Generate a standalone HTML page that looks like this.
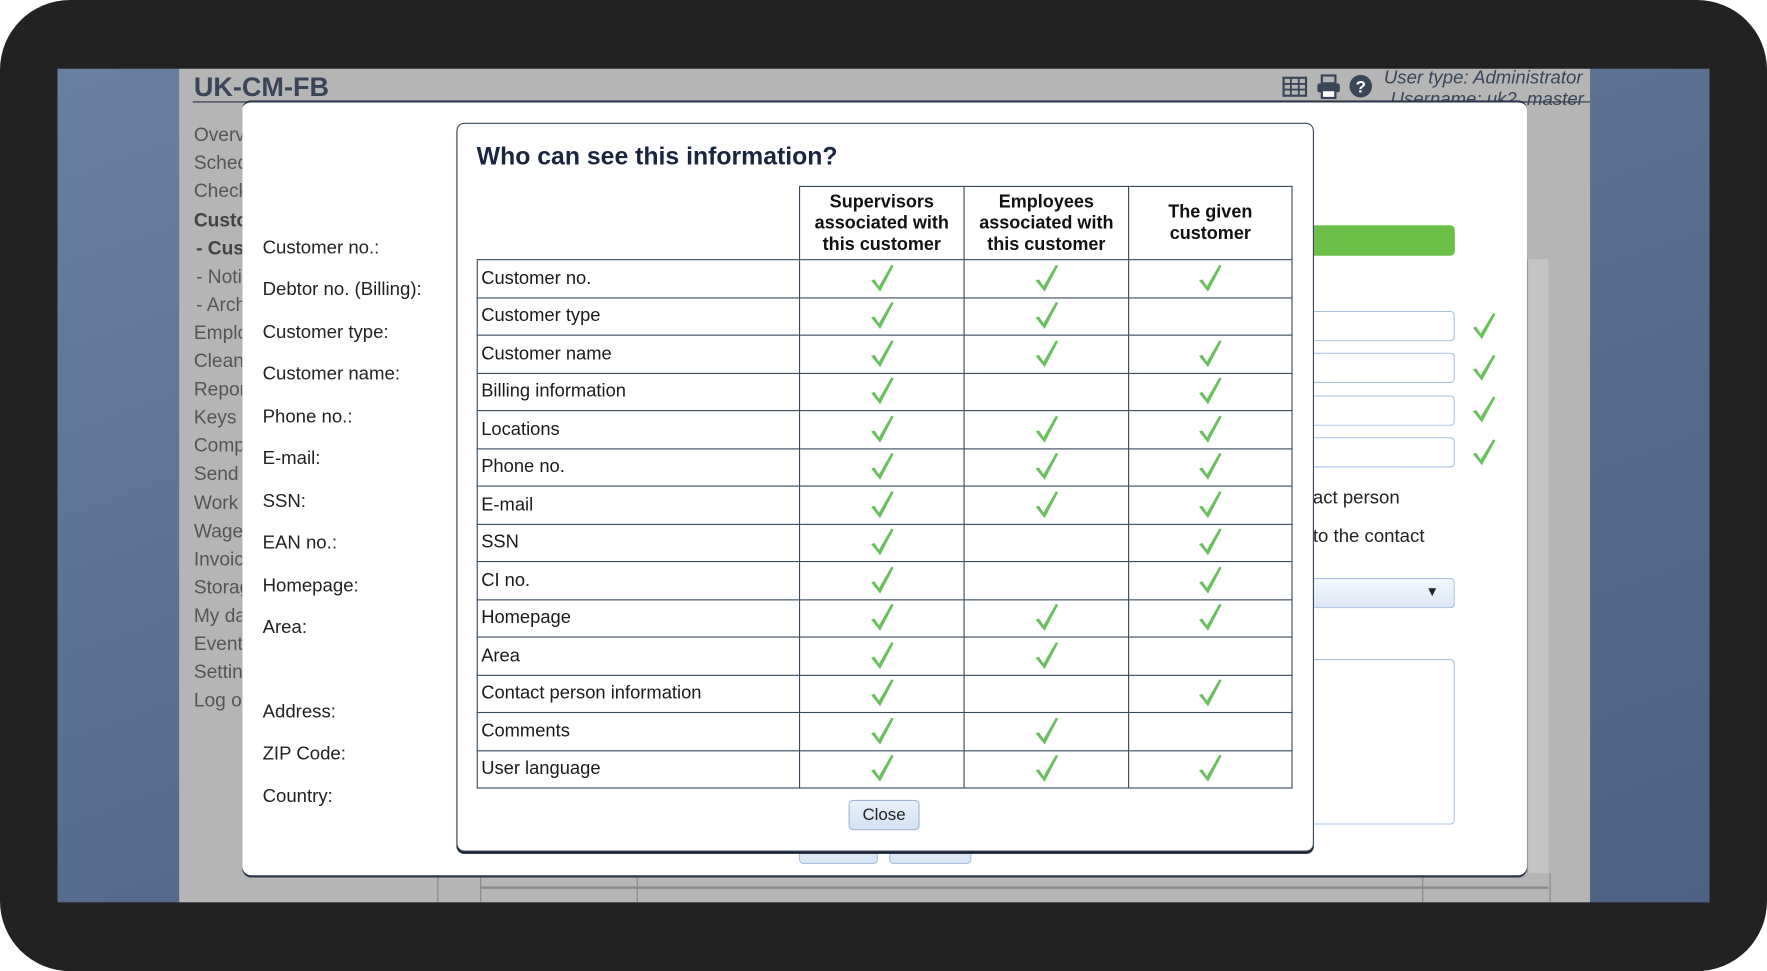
<!DOCTYPE html>
<html><head><meta charset="utf-8"><style>
html,body{margin:0;padding:0;width:1767px;height:971px;overflow:hidden;background:#fff;font-family:"Liberation Sans",Arial,sans-serif}
#w{position:absolute;left:0;top:0;width:1568px;height:862px;transform:scale(1.12691,1.1265);transform-origin:0 0;background:#fff}
.frame{position:absolute;left:0;top:0;width:1568px;height:862px;background:#222222;border-radius:62px}
.scr{position:absolute;left:51px;top:61px;width:1466px;height:740px;background:linear-gradient(160deg,#6a7f9e,#566b8b 60%,#4d6283);overflow:hidden}
.app{position:absolute;left:108px;top:0;width:1252px;height:740px;background:#b5b5b5}
.a{position:absolute;white-space:nowrap}
.menu{position:absolute;left:121px;font-size:17px;color:#555}
.lbl{position:absolute;left:233px;font-size:16.5px;color:#222}
.om{position:absolute;left:215px;top:89px;width:1140px;height:686px;background:#fff;border-radius:8px;box-shadow:0 2px 0 #2a3548;border-top:2px solid #2a3548}
.inp{position:absolute;left:1165px;width:125px;height:25px;border:1px solid #a8c0e0;border-left:none;border-radius:0 4px 4px 0;background:#fff}
.im{position:absolute;left:405px;top:109px;width:759px;height:645px;background:#fff;border:1px solid #3a4a5f;border-radius:7px;box-shadow:0 2px 0 #1a2233}
table{position:absolute;left:423px;top:165px;border-collapse:collapse;table-layout:fixed;width:723px;font-size:16.3px;color:#1a1a1a}
td{border:1.5px solid #3a4a5f;height:32px;padding:0 3px;box-sizing:border-box}
tr.r{height:33.5px}
td.c{text-align:center;padding:0}
th{border:1.5px solid #3a4a5f;font-weight:bold;font-size:16px;line-height:19px;height:64px;padding:0;color:#111}
th.e{border:none;border-bottom:1.5px solid #3a4a5f}
svg.k{width:22px;height:25px;vertical-align:middle}
</style></head><body><div id="w">
<div class="frame"></div>
<div class="scr">
 <div class="app">
  <div class="a" style="left:13px;top:3px;font-size:24px;font-weight:bold;color:#3a4658">UK-CM-FB</div>
  <div style="position:absolute;left:12px;top:29px;width:1240px;height:1px;background:#2a3548"></div>
  <div class="a" style="left:1069px;top:-1px;font-size:16.5px;font-style:italic;color:#3a4658">User type: Administrator</div>
  <div class="a" style="left:1075px;top:18px;font-size:16.5px;font-style:italic;color:#3a4658">Username: uk2_master</div>
  <svg class="a" style="left:979px;top:7px" width="22" height="18" viewBox="0 0 22 18"><rect x="1" y="1" width="20" height="16" fill="none" stroke="#3a4658" stroke-width="2"/><path d="M1 6.5H21M1 11.5H21M7.5 1V17M14.5 1V17" stroke="#3a4658" stroke-width="1.6"/></svg>
  <svg class="a" style="left:1009px;top:5px" width="22" height="22" viewBox="0 0 22 22"><rect x="5" y="1" width="12" height="7" fill="none" stroke="#3a4658" stroke-width="2"/><rect x="1" y="8" width="20" height="8" rx="2" fill="#3a4658"/><rect x="5" y="14" width="12" height="7" fill="#fff" stroke="#3a4658" stroke-width="2"/></svg>
  <svg class="a" style="left:1038px;top:5px" width="21" height="21" viewBox="0 0 21 21"><circle cx="10.5" cy="10.5" r="10" fill="#3a4658"/><text x="10.5" y="16" font-size="15" font-weight="bold" text-anchor="middle" fill="#fff" font-family="Liberation Sans">?</text></svg>
 </div>
</div>
<div class="menu" style="top:110px;left:172px">Overv</div>
<div class="menu" style="top:135px;left:172px">Sched</div>
<div class="menu" style="top:160px;left:172px">Check</div>
<div class="menu" style="top:186px;left:172px;font-weight:bold;color:#444">Custo</div>
<div class="menu" style="top:211px;left:174px;font-weight:bold;color:#444">- Cus</div>
<div class="menu" style="top:236px;left:174px">- Noti</div>
<div class="menu" style="top:261px;left:174px">- Arch</div>
<div class="menu" style="top:286px;left:172px">Emplo</div>
<div class="menu" style="top:311px;left:172px">Clean</div>
<div class="menu" style="top:336px;left:172px">Repor</div>
<div class="menu" style="top:361px;left:172px">Keys</div>
<div class="menu" style="top:386px;left:172px">Comp</div>
<div class="menu" style="top:411px;left:172px">Send</div>
<div class="menu" style="top:437px;left:172px">Work</div>
<div class="menu" style="top:462px;left:172px">Wage</div>
<div class="menu" style="top:487px;left:172px">Invoic</div>
<div class="menu" style="top:512px;left:172px">Storag</div>
<div class="menu" style="top:537px;left:172px">My da</div>
<div class="menu" style="top:562px;left:172px">Event</div>
<div class="menu" style="top:587px;left:172px">Settin</div>
<div class="menu" style="top:612px;left:172px">Log o</div>
<div style="position:absolute;left:388px;top:775px;width:1px;height:26px;background:#888"></div>
<div style="position:absolute;left:426px;top:775px;width:948px;height:26px;border-left:1px solid #888;border-right:1px solid #888"></div>
<div style="position:absolute;left:426px;top:787px;width:948px;height:2px;background:#888"></div>
<div style="position:absolute;left:565px;top:775px;width:1px;height:26px;background:#888"></div>
<div style="position:absolute;left:1262px;top:775px;width:1px;height:26px;background:#888"></div>
<div style="position:absolute;left:1355px;top:230px;width:18px;height:545px;background:#c4c4c4;border-left:1px solid #999"></div>
<div class="om"></div>
<div class="lbl" style="top:211px">Customer no.:</div>
<div class="lbl" style="top:248px">Debtor no. (Billing):</div>
<div class="lbl" style="top:286px">Customer type:</div>
<div class="lbl" style="top:323px">Customer name:</div>
<div class="lbl" style="top:361px">Phone no.:</div>
<div class="lbl" style="top:398px">E-mail:</div>
<div class="lbl" style="top:436px">SSN:</div>
<div class="lbl" style="top:473px">EAN no.:</div>
<div class="lbl" style="top:511px">Homepage:</div>
<div class="lbl" style="top:548px">Area:</div>
<div class="lbl" style="top:623px">Address:</div>
<div class="lbl" style="top:660px">ZIP Code:</div>
<div class="lbl" style="top:698px">Country:</div>
<div style="position:absolute;left:1160px;top:200px;width:131px;height:27px;background:#6cc04a;border-radius:0 4px 4px 0"></div>
<div class="inp" style="top:276px"></div>
<div class="inp" style="top:313px"></div>
<div class="inp" style="top:351px"></div>
<div class="inp" style="top:388px"></div>
<div class="lbl" style="left:1165px;top:433px">act person</div>
<div class="lbl" style="left:1165px;top:467px">to the contact</div>
<div class="inp" style="top:513px;background:linear-gradient(#f4f8fd,#dce7f5)"><span style="position:absolute;left:100px;top:4px;font-size:12px;color:#222">▼</span></div>
<div class="inp" style="top:585px;height:145px"></div>
<div style="position:absolute;left:709px;top:745px;width:68px;height:20px;background:#dce7f5;border:1px solid #a8c0e0;border-radius:4px"></div>
<div style="position:absolute;left:789px;top:745px;width:71px;height:20px;background:#dce7f5;border:1px solid #a8c0e0;border-radius:4px"></div>
<svg class="a" style="left:1306px;top:278px" width="22" height="24" viewBox="0 0 22 24"><path d="M1 13 L4 12 L8 18 L19 0 L21 1 L9 23 Z" fill="#6abf5e"/></svg>
<svg class="a" style="left:1306px;top:315px" width="22" height="24" viewBox="0 0 22 24"><path d="M1 13 L4 12 L8 18 L19 0 L21 1 L9 23 Z" fill="#6abf5e"/></svg>
<svg class="a" style="left:1306px;top:352px" width="22" height="24" viewBox="0 0 22 24"><path d="M1 13 L4 12 L8 18 L19 0 L21 1 L9 23 Z" fill="#6abf5e"/></svg>
<svg class="a" style="left:1306px;top:390px" width="22" height="24" viewBox="0 0 22 24"><path d="M1 13 L4 12 L8 18 L19 0 L21 1 L9 23 Z" fill="#6abf5e"/></svg>
<div class="im"></div>
<div class="a" style="left:423px;top:126px;font-size:22px;font-weight:bold;color:#1a2540">Who can see this information?</div>
<table id="t">
<colgroup><col style="width:286px"><col style="width:146px"><col style="width:146px"><col style="width:145px"></colgroup>
<tr><th class="e"></th><th>Supervisors<br>associated with<br>this customer</th><th>Employees<br>associated with<br>this customer</th><th>The given<br>customer</th></tr>
</table>
<div style="position:absolute;left:753px;top:710px;width:61px;height:25px;background:linear-gradient(#e8f0fa,#d3e1f3);border:1px solid #9fb5d5;border-radius:4px;font-size:15px;text-align:center;line-height:25px;color:#222">Close</div>
</div>
<script>
var rows=[["Customer no.","111"],["Customer type","110"],["Customer name","111"],["Billing information","101"],["Locations","111"],["Phone no.","111"],["E-mail","111"],["SSN","101"],["CI no.","101"],["Homepage","111"],["Area","110"],["Contact person information","101"],["Comments","110"],["User language","111"]];
var ck='<svg class="k" viewBox="0 0 22 25"><path d="M1 14 L4 13 L8 19 L19 0 L21 1 L9 24 Z" fill="#6abf5e"/></svg>';
var t=document.getElementById("t");
rows.forEach(function(r){var h='<tr class="r"><td>'+r[0]+"</td>";for(var i=0;i<3;i++)h+='<td class="c">'+(r[1][i]=="1"?ck:"")+"</td>";t.insertAdjacentHTML("beforeend",h+"</tr>");});
</script>
</body></html>
